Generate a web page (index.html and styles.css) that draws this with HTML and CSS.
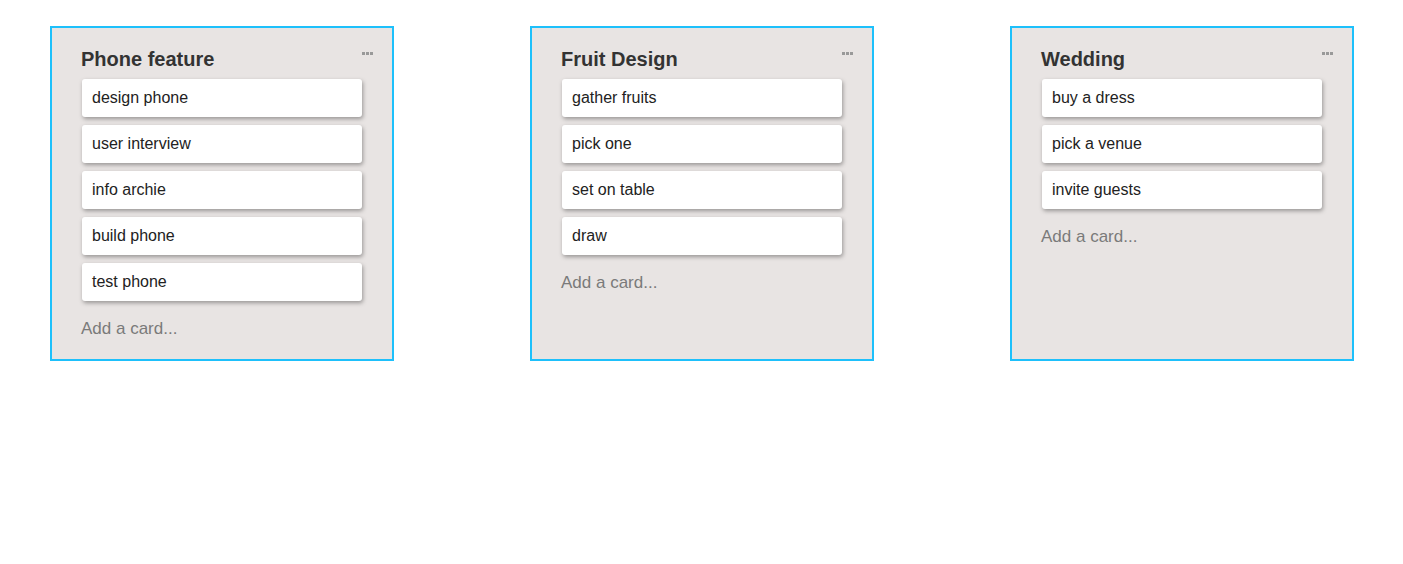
FILE: index.html
```html
<!DOCTYPE html>
<html lang="en">

<head>
    <meta charset="UTF-8">
    <meta name="viewport" content="width=device-width, initial-scale=1.0">
    <title>Board</title>
    <link rel="stylesheet" href="styles.css">
</head>

<body>
    <div class="board">
        <div class="list">
            <div class="list-header">
                <h2 class="list-title">Phone feature</h2>
                <span class="list-menu"><i></i><i></i><i></i></span>
            </div>
            <div class="card">design phone</div>
            <div class="card">user interview</div>
            <div class="card">info archie</div>
            <div class="card">build phone</div>
            <div class="card">test phone</div>
            <div class="add-card">Add a card...</div>
        </div>

        <div class="list">
            <div class="list-header">
                <h2 class="list-title">Fruit Design</h2>
                <span class="list-menu"><i></i><i></i><i></i></span>
            </div>
            <div class="card">gather fruits</div>
            <div class="card">pick one</div>
            <div class="card">set on table</div>
            <div class="card">draw</div>
            <div class="add-card">Add a card...</div>
        </div>

        <div class="list">
            <div class="list-header">
                <h2 class="list-title">Wedding</h2>
                <span class="list-menu"><i></i><i></i><i></i></span>
            </div>
            <div class="card">buy a dress</div>
            <div class="card">pick a venue</div>
            <div class="card">invite guests</div>
            <div class="add-card">Add a card...</div>
        </div>
    </div>
</body>

</html>
```

FILE: styles.css
```css
body {
    margin: 0;
    font-family: "Liberation Sans", Arial, sans-serif;
    color: #333;
    background: #fff;
}

.board {
    display: flex;
    align-items: stretch;
    gap: 136px;
    padding: 26px 0 0 50px;
}

.list {
    width: 280px;
    padding: 19px 30px 19px 30px;
    background-color: #e8e4e3;
    border: 2px solid #1ec0fb;
    display: flex;
    flex-direction: column;
    gap: 8px;
}

.list-header {
    display: flex;
    justify-content: space-between;
    align-items: flex-start;
    margin-left: -1px;
    margin-right: -11px;
    height: 24px;
}

.list-title {
    margin: 0;
    font-size: 20px;
    line-height: 24px;
    font-weight: bold;
    color: #333;
}

.list-menu {
    display: flex;
    gap: 1px;
    margin-top: 5px;
}

.list-menu i {
    width: 3px;
    height: 3px;
    background: #999;
}

.card {
    background: #fff;
    border-radius: 3px;
    padding: 0 10px;
    height: 38px;
    line-height: 38px;
    font-size: 16px;
    color: #222;
    box-shadow: 1px 2px 4px rgba(0, 0, 0, 0.35);
}

.add-card {
    margin-top: 9px;
    margin-left: -1px;
    font-size: 17px;
    line-height: 22px;
    color: #7a7a7a;
}
```
